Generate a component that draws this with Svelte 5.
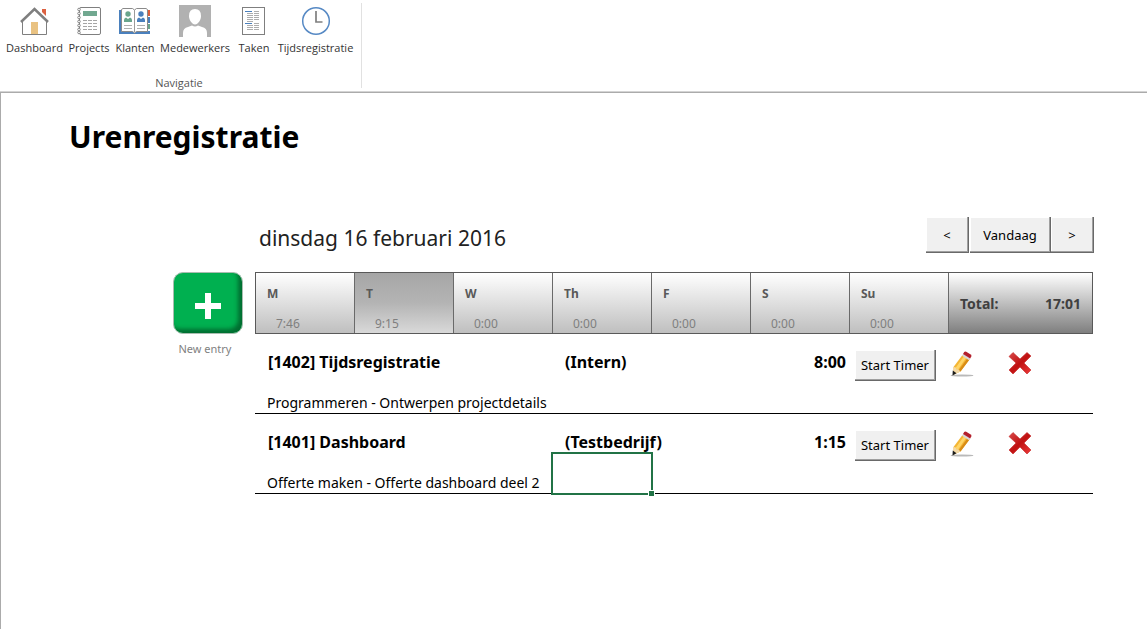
<script>
  const nav = ['Dashboard', 'Projects', 'Klanten', 'Medewerkers', 'Taken', 'Tijdsregistratie'];

  const days = [
    { name: 'M', hours: '7:46' },
    { name: 'T', hours: '9:15' },
    { name: 'W', hours: '0:00' },
    { name: 'Th', hours: '0:00' },
    { name: 'F', hours: '0:00' },
    { name: 'S', hours: '0:00' },
    { name: 'Su', hours: '0:00' }
  ];

  const entries = [
    { project: '[1402] Tijdsregistratie', client: '(Intern)', hours: '8:00', note: 'Programmeren - Ontwerpen projectdetails' },
    { project: '[1401] Dashboard', client: '(Testbedrijf)', hours: '1:15', note: 'Offerte maken - Offerte dashboard deel 2' }
  ];

  let selectedDay = $state(1);
  let activeEntry = $state(1);
</script>

{#snippet navIcon(name)}
  <svg class="nav-icon" viewBox="0 0 34 34" aria-hidden="true">
    {#if name === 'Dashboard'}
      <path d="M24 4h4v7l-4-4z" fill="#dc6140" />
      <path d="M4.500 17.500 16.500 6l12 11.500V29.500h-24z" fill="#fff" />
      <path d="M13 17h7v12h-7z" fill="#e9c282" />
      <path d="M3 17 16.500 4 30 17" fill="none" stroke="#7f7f7f" stroke-width="2.500" />
      <path d="M4.500 17v12.500h24V17" fill="none" stroke="#7f7f7f" />
    {:else if name === 'Projects'}
      <rect x="7.500" y="2.500" width="21" height="27" rx="1.500" fill="#fff" stroke="#7f7f7f" />
      <path d="M11 6h14v5H11z" fill="#71a890" />
      <path d="M11 15.500h14M11 18.500h14M11 21.500h14M11 24.500h14" stroke="#a6a6a6" stroke-dasharray="4 1" />
      <g fill="#fff" stroke="#8a8a8a">
        {#each [4.5, 8.5, 12.5, 16.5, 20.5, 24.5, 27.5] as y}
          <circle cx="7" cy={y} r="1.300" />
        {/each}
      </g>
    {:else if name === 'Klanten'}
      <path d="M1 5h31v24H1z" fill="#4a80bd" />
      <path d="M29 5h3v6h-3z" fill="#dc5f3d" />
      <path d="M29 12h3v6h-3z" fill="#4a80bd" />
      <path d="M29 19h3v5h-3z" fill="#69a58c" />
      <path d="M29 11h3v1h-3zM29 18h3v1h-3zM29 24h3v2h-3z" fill="#fff" />
      <path d="M3.500 4.500 5 3.500h9.500L16.500 5l2-1.500H28L29.500 4.500V26.500H18.500L16.500 28l-2-1.500h-11z" fill="#fff" stroke="#8a8a8a" />
      <path d="M16.500 5v22" stroke="#9a9a9a" />
      <g fill="#69a58c"><circle cx="10" cy="9" r="2.700" /><path d="M6 17v-2q0-2 2-2.500l2 1.500 2-1.500q2 .5 2 2.500v2z" /></g>
      <g fill="#4a80bd"><circle cx="23" cy="9" r="2.700" /><path d="M19 17v-2q0-2 2-2.500l2 1.500 2-1.500q2 .5 2 2.500v2z" /></g>
      <path d="M6 20.500h8M6 23.500h8M19 20.500h8M19 23.500h8" stroke="#b0b0b0" />
    {:else if name === 'Medewerkers'}
      <path d="M1 0h32v32H1z" fill="#b1b1b1" />
      <path d="M17 4q6 0 6 7c0 4-3 8.500-6 8.500S11 15 11 11q0-7 6-7z" fill="#fff" />
      <path d="M5 32v-4q0-5 5-6l4-1.500q3 2 6 0l4 1.500q5 1 5 6v4z" fill="#fff" />
    {:else if name === 'Taken'}
      <rect x="5.500" y="2.500" width="22" height="27" fill="#fff" stroke="#7f7f7f" />
      <path d="M10 8.500h6M10 10.500h6M10 12.500h6M10 14.500h6M10 16.500h6M10 20.500h6M10 22.500h6M10 24.500h6M17 6.500h5M17 8.500h5M17 10.500h5M17 12.500h5M17 14.500h5M17 18.500h5M17 20.500h5M17 22.500h5M17 24.500h5" stroke="#adadad" />
      <path d="M8 6.500h7M8 18.500h7" stroke="#4a80bd" />
    {:else}
      <circle cx="17" cy="16" r="13.300" fill="#fff" stroke="#5689c4" stroke-width="1.500" />
      <path d="M17 6v11h6.500" fill="none" stroke="#7f7f7f" stroke-width="1.700" />
    {/if}
  </svg>
{/snippet}

<header class="ribbon">
  <section class="group" aria-labelledby="nav-title">
    <nav>
      {#each nav as name}
        <button class="nav-item">{@render navIcon(name)}<span>{name}</span></button>
      {/each}
    </nav>
    <div class="group-title" id="nav-title">Navigatie</div>
  </section>
</header>

<main>
  <h1>Urenregistratie</h1>

  <div class="board">
    <div class="date-bar">
      <h2>dinsdag 16 februari 2016</h2>
      <div class="pager">
        <button class="push" aria-label="Vorige dag">&lt;</button>
        <button class="push today">Vandaag</button>
        <button class="push" aria-label="Volgende dag">&gt;</button>
      </div>
    </div>

    <div class="new-entry">
      <button class="add" aria-labelledby="new-entry-label">
        <svg viewBox="0 0 28 28" aria-hidden="true">
          <path d="M14 1v26M1 14h26" stroke="#fff" stroke-width="6" />
        </svg>
      </button>
      <span id="new-entry-label">New entry</span>
    </div>

    <div class="sheet">
      <div class="week">
        {#each days as day, i}
          <button class="day" class:selected={i === selectedDay} onclick={() => (selectedDay = i)}>
            <b>{day.name}</b><span>{day.hours}</span>
          </button>
        {/each}
        <div class="total"><span>Total:</span><span>17:01</span></div>
      </div>

      {#each entries as entry, i}
        <article class="entry">
          <strong class="project">{entry.project}</strong>
          <strong class="client">{entry.client}</strong>
          <strong class="hours">{entry.hours}</strong>
          <div class="actions">
            <button class="push timer">Start Timer</button>
            <button class="icon edit" aria-label="Bewerken">
              <svg viewBox="0 0 24 28" aria-hidden="true">
                <ellipse cx="12" cy="25.500" rx="11.500" ry="1" fill="#b9b9b9" />
                <path d="m3.500 17 9-12 7 4.500-9 12-7 3z" fill="#f4b634" />
                <path d="m5.500 18 9-12.500 2.300 1.500-9 13z" fill="#ffd567" />
                <path d="m17.500 8.300 2 1.200-9 12-2-1z" fill="#d98c16" />
                <path d="m3.500 17 2.300.5.700 1.700 2 .3 2 2-7.300 3.500z" fill="#f3d9a6" />
                <path d="m2.800 20.500 3.700 2.700-4 2.300z" fill="#1c1c1c" />
                <path d="m12 5.700 1.200-1.900 7 4.500-1.200 1.900z" fill="#d7d7d7" />
                <path d="m13 4 1.200-2q.8-1 2-.3l4.500 2.700q1.200.8.600 2L20.200 8.500z" fill="#b3202c" />
              </svg>
            </button>
            <button class="icon delete" aria-label="Verwijderen">
              <svg viewBox="0 0 24 24" aria-hidden="true">
                <defs>
                  <linearGradient id="red{i}" x1="0" y1="0" x2="1" y2="1">
                    <stop offset="0" stop-color="#d84a4a" /><stop offset=".5" stop-color="#c01212" /><stop offset="1" stop-color="#ee3a3a" />
                  </linearGradient>
                </defs>
                <path d="M5 1.500 12 8l7-6.500L23 5l-7 7 7 7-4 4-7-7-7 7-4-4 7-7-7-6.500z" fill="url(#red{i})" stroke="#c22525" stroke-width=".6" stroke-linejoin="round" />
              </svg>
            </button>
          </div>
          <button class="note" onclick={() => (activeEntry = i)}>{entry.note}</button>
          {#if i === activeEntry}
            <div class="cell-anchor"><div class="cell-cursor"></div></div>
          {/if}
        </article>
      {/each}
    </div>
  </div>
</main>

<style>
  :global(body) {
    background: #fff;
    color: #000;
    font-family: 'Noto Sans', sans-serif;
  }
  :global(#app) {
    min-height: 100vh;
    display: flex;
    flex-direction: column;
  }
  button {
    font: inherit;
    color: inherit;
    margin: 0;
    padding: 0;
    border: 0;
    background: none;
  }
  svg {
    display: block;
  }

  .ribbon {
    display: flex;
    padding-top: 3px;
    padding-bottom: 4px;
    border-bottom: 1px solid #ababab;
    box-shadow: inset 0 -1px #d4d4d4;
  }
  .group {
    padding: 2px 6px 0 3px;
    border-right: 1px solid #e1e1e1;
    font-family: 'Open Sans', sans-serif;
    font-size: 11px;
    line-height: 16px;
    color: #333;
  }
  nav {
    display: grid;
    grid-template-columns: 63px 46px 46px 74px 44px 79px;
  }
  .nav-item {
    display: flex;
    flex-direction: column;
    align-items: center;
    gap: 1px;
    white-space: nowrap;
  }
  .nav-icon {
    width: 34px;
    height: 34px;
  }
  .group-title {
    margin-top: 22px;
    line-height: 10px;
    text-align: center;
    color: #555;
  }

  main {
    flex: 1;
    padding: 22px 54px 0 68px;
    border-left: 1px solid #ababab;
  }
  h1 {
    margin: 0;
    font-size: 30px;
    line-height: 44px;
    font-weight: 700;
  }
  .board {
    display: grid;
    grid-template-columns: 70px minmax(0, 1fr);
    column-gap: 12px;
    margin: 58px 0 0 104px;
  }
  .date-bar {
    grid-column: 2;
    display: flex;
    justify-content: space-between;
    height: 55px;
    margin-right: -1px;
  }
  h2 {
    margin: 0 0 0 4px;
    font-size: 21px;
    line-height: 42px;
    font-weight: 400;
    color: #222;
  }
  .pager {
    display: flex;
    height: 36px;
  }
  .push {
    width: 43px;
    font-size: 13px;
    background: #f0f0f0;
    border-right: 1px solid #696969;
    border-bottom: 1px solid #696969;
    box-shadow: inset -1px -1px #a0a0a0, inset 1px 1px #fff;
  }
  .push.today {
    width: 81px;
    margin-left: 1px;
  }

  .new-entry {
    display: flex;
    flex-direction: column;
    align-items: flex-start;
    gap: 7px;
    font-size: 11px;
    line-height: 16px;
    color: #7f7f7f;
  }
  .new-entry span {
    width: 64px;
    text-align: center;
  }
  .add {
    display: grid;
    place-items: center;
    width: 70px;
    height: 62px;
    border: 1px solid #a9bdb0;
    border-radius: 10px;
    background: #00b050;
    box-shadow: inset -4px -4px 4px #006d30;
  }
  .add svg {
    width: 28px;
    height: 28px;
    margin: 5px 0 0 0;
  }

  .week {
    display: grid;
    grid-template-columns: repeat(7, minmax(0, 99fr)) minmax(0, 143fr);
    height: 62px;
    box-sizing: border-box;
    border: 1px solid #595959;
    font-size: 12px;
  }
  .day {
    display: flex;
    flex-direction: column;
    justify-content: space-between;
    align-items: flex-start;
    padding: 12px 11px 0;
    line-height: 18px;
    color: #595959;
    border-right: 1px solid #6a6a6a;
    background: linear-gradient(#fff, #bfbfbf);
  }
  .day.selected {
    background: linear-gradient(#a6a6a6, #b4b4b4 50%, #d9d9d9);
  }
  .day span {
    padding-left: 9px;
    color: #7f7f7f;
  }
  .total {
    display: flex;
    justify-content: space-between;
    align-items: center;
    padding: 0 11px;
    font-size: 14px;
    font-weight: 700;
    color: #404040;
    background: linear-gradient(#fff, #7f7f7f);
  }

  .entry {
    display: grid;
    grid-template-columns: minmax(0, 297fr) minmax(0, 198fr) minmax(0, 99fr) minmax(0, 244fr);
    grid-template-rows: 59px 20px;
    border-bottom: 1px solid #000;
    font-size: 16px;
    line-height: 24px;
  }
  .entry > strong {
    margin-top: 16px;
    white-space: nowrap;
  }
  .project,
  .client {
    padding-left: 13px;
  }
  .hours {
    padding-right: 3px;
    text-align: right;
  }
  .actions {
    display: flex;
    align-items: flex-start;
    padding: 16px 0 0 6px;
  }
  .timer {
    width: 81px;
    height: 31px;
    white-space: nowrap;
  }
  .edit {
    width: 24px;
    margin-left: 14px;
  }
  .delete {
    width: 24px;
    margin: 1px 0 0 34px;
  }
  .note {
    grid-area: 2 / 1;
    padding-left: 12px;
    text-align: left;
    font-size: 14px;
    line-height: 20px;
    white-space: nowrap;
  }
  .cell-anchor {
    grid-area: 2 / 2;
    position: relative;
  }
  .cell-cursor {
    position: absolute;
    left: -1px;
    bottom: -2px;
    width: calc(50% - 1px);
    height: 39px;
    border: 2px solid #217346;
  }
  .cell-cursor::after {
    content: '';
    position: absolute;
    right: -4px;
    bottom: -4px;
    width: 5px;
    height: 5px;
    background: #217346;
    border: 1px solid #fff;
  }
</style>
